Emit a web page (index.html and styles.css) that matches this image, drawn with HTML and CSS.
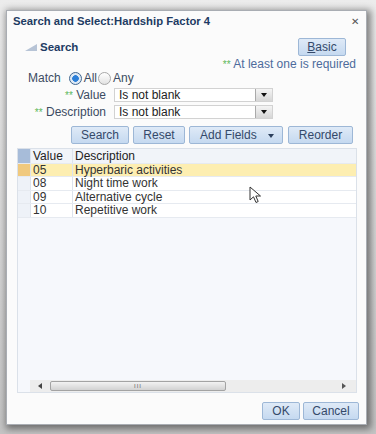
FILE: index.html
```html
<!DOCTYPE html>
<html>
<head>
  <meta charset="utf-8">
  <title>Search and Select</title>
  <link rel="stylesheet" href="styles.css">
</head>
<body>
  <div class="dialog">
    <div class="titlebar">
      <span class="title">Search and Select:Hardship Factor 4</span>
      <span class="close">&#x2715;</span>
    </div>

    <div class="search-head">
      <span class="disclosure"></span>
      <span class="search-label">Search</span>
      <button class="btn basic"><u>B</u>asic</button>
    </div>
    <div class="required"><span class="stars">**</span> At least one is required</div>

    <div class="match-row">
      <span class="match-label">Match</span>
      <span class="radio on"></span><span class="opt">All</span>
      <span class="radio"></span><span class="opt">Any</span>
    </div>
    <div class="field-row">
      <label><span class="stars">**</span> Value</label>
      <div class="select">Is not blank<span class="drop"></span></div>
    </div>
    <div class="field-row">
      <label><span class="stars">**</span> Description</label>
      <div class="select">Is not blank<span class="drop"></span></div>
    </div>

    <div class="actions">
      <button class="btn w-search">Search</button>
      <button class="btn w-reset">Reset</button>
      <button class="btn w-add">Add Fields<span class="caret"></span></button>
      <button class="btn w-reorder">Reorder</button>
    </div>

    <div class="table">
      <div class="row head">
        <span class="sel"></span><span class="c-val">Value</span><span class="c-desc">Description</span>
      </div>
      <div class="row current">
        <span class="sel"></span><span class="c-val">05</span><span class="c-desc">Hyperbaric activities</span>
      </div>
      <div class="row">
        <span class="sel"></span><span class="c-val">08</span><span class="c-desc">Night time work</span>
      </div>
      <div class="row">
        <span class="sel"></span><span class="c-val">09</span><span class="c-desc">Alternative cycle</span>
      </div>
      <div class="row">
        <span class="sel"></span><span class="c-val">10</span><span class="c-desc">Repetitive work</span>
      </div>
      <div class="table-fill"></div>
      <div class="hscroll">
        <span class="arrow left"></span>
        <div class="track"><div class="thumb">III</div></div>
        <span class="arrow right"></span>
      </div>
    </div>

    <div class="footer">
      <button class="btn w-ok">OK</button>
      <button class="btn w-cancel">Cancel</button>
    </div>

    <svg class="pointer" width="14" height="18" viewBox="0 0 14 18">
      <path d="M1 1 L1 14 L4.5 10.8 L7 16.5 L9.2 15.5 L6.8 10 L11.5 10 Z" fill="#fff" stroke="#333" stroke-width="1"/>
    </svg>
  </div>
</body>
</html>
```

FILE: styles.css
```css
body {
  margin: 0;
  width: 376px;
  height: 434px;
  overflow: hidden;
  background: linear-gradient(#ececec, #c4c4c4);
  font-family: "Liberation Sans", Arial, sans-serif;
  font-size: 12px;
  color: #333;
  padding: 10px 0 0 6px;
  box-sizing: border-box;
}
.dialog {
  position: relative;
  width: 361px;
  height: 415px;
  box-sizing: border-box;
  background: #fbfbfb;
  border: 1px solid #a9adb3;
  box-shadow: 2px 2px 7px 2px rgba(0,0,0,0.45);
}
.titlebar {
  display: flex;
  align-items: center;
  justify-content: space-between;
  height: 20px;
  padding: 0 7px 0 6px;
}
.title {
  font-weight: bold;
  font-size: 11.3px;
  color: #1e3b63;
}
.close {
  font-size: 10px;
  color: #555;
}
.search-head {
  display: flex;
  align-items: center;
  height: 18px;
  margin-top: 7px;
  padding: 0 20px 0 18px;
}
.disclosure {
  width: 0;
  height: 0;
  border-left: 12px solid transparent;
  border-bottom: 7px solid #b7c4d6;
  margin-right: 3px;
}
.search-label {
  font-weight: bold;
  font-size: 11.5px;
  color: #1e3b63;
  flex: 1;
}
.btn {
  font-family: "Liberation Sans", Arial, sans-serif;
  font-size: 12px;
  color: #34496a;
  height: 18px;
  padding: 0;
  border: 1px solid #9db7d6;
  border-radius: 2px;
  background: linear-gradient(#dfeaf7, #c5d9f0);
  box-sizing: border-box;
}
.basic { width: 48px; }
.required {
  text-align: right;
  padding-right: 10px;
  height: 14px;
  line-height: 14px;
  margin-top: 1px;
  color: #4d6b9c;
}
.stars { color: #5cb85c; font-size: 10px; }
.match-row {
  display: flex;
  align-items: center;
  height: 14px;
  padding-left: 21px;
  color: #3b4b62;
}
.match-label { margin-right: 8px; }
.radio {
  width: 11px;
  height: 11px;
  border-radius: 50%;
  border: 1px solid #a8a8a8;
  background: linear-gradient(#ffffff, #e2e2e2);
}
.radio.on {
  border-color: #40668f;
  background: radial-gradient(circle, #2c7fd8 0 3px, #dde9f5 3.6px);
}
.opt { margin: 0 1px 0 2px; }
.field-row {
  display: flex;
  align-items: center;
  height: 14px;
  margin-top: 3px;
  color: #3b4b62;
}
.field-row label {
  width: 107px;
  text-align: right;
  padding-right: 8px;
  box-sizing: border-box;
}
.select {
  position: relative;
  width: 159px;
  height: 14px;
  box-sizing: border-box;
  border: 1px solid #d2d2d2;
  background: #fff;
  padding-left: 4px;
  line-height: 12px;
  color: #222;
}
.drop {
  position: absolute;
  right: 0;
  top: 0;
  width: 17px;
  height: 12px;
  box-sizing: border-box;
  border-left: 1px solid #aaa;
  background: linear-gradient(#f4f4f4, #d6d6d6);
}
.drop::after {
  content: "";
  position: absolute;
  left: 5px;
  top: 4px;
  border-left: 3.5px solid transparent;
  border-right: 3.5px solid transparent;
  border-top: 4px solid #111;
}
.actions {
  display: flex;
  gap: 4px;
  padding-left: 64px;
  margin-top: 7px;
}
.w-search { width: 58px; }
.w-reset { width: 52px; }
.w-add { width: 94px; text-align: left; padding-left: 10px; position: relative; }
.w-reorder { width: 65px; margin-left: 1px; }
.caret {
  position: absolute;
  right: 8px;
  top: 7px;
  border-left: 3.5px solid transparent;
  border-right: 3.5px solid transparent;
  border-top: 4px solid #2b3f5c;
}
.table {
  display: flex;
  flex-direction: column;
  margin: 4px 9px 0 10px;
  height: 245px;
  border: 1px solid #dbe1e9;
  background: #f6f8fc;
  box-sizing: border-box;
}
.row {
  display: flex;
  height: 13.4px;
  line-height: 13px;
  background: #fff;
  border-bottom: 1px solid #e6eaf0;
  box-sizing: border-box;
  color: #333;
}
.row.head {
  height: 15px;
  line-height: 15px;
  background: #f1f4f9;
  color: #222;
}
.row.current { background: #fdeeb1; }
.sel {
  width: 12px;
  background: #eef2f8;
  border-right: 1px solid #dde3ec;
}
.head .sel { background: #a7bcd9; }
.current .sel { background: #f0c97e; }
.c-val {
  width: 42px;
  padding-left: 2px;
  box-sizing: border-box;
  border-right: 1px solid #dde3ec;
}
.c-desc { padding-left: 2px; }
.table-fill { flex: 1; }
.hscroll {
  display: flex;
  align-items: center;
  height: 12px;
  margin-left: 12px;
  background: #ededed;
}
.arrow {
  width: 0;
  height: 0;
  border-top: 3px solid transparent;
  border-bottom: 3px solid transparent;
}
.arrow.left { border-right: 4px solid #444; margin: 0 0 0 8px; }
.arrow.right { border-left: 4px solid #555; margin: 0 10px 0 0; }
.track { flex: 1; padding-left: 8px; }
.thumb {
  width: 176px;
  height: 10px;
  box-sizing: border-box;
  border: 1px solid #a3a3a3;
  border-radius: 2px;
  background: linear-gradient(#f2f2f2, #d2d2d2);
  font-size: 6px;
  line-height: 8px;
  text-align: center;
  color: #666;
  letter-spacing: 1px;
}
.footer {
  display: flex;
  justify-content: flex-end;
  gap: 3px;
  padding-right: 7px;
  margin-top: 9px;
}
.w-ok { width: 38px; }
.w-cancel { width: 56px; }
.pointer {
  position: absolute;
  left: 242px;
  top: 175px;
}
```
